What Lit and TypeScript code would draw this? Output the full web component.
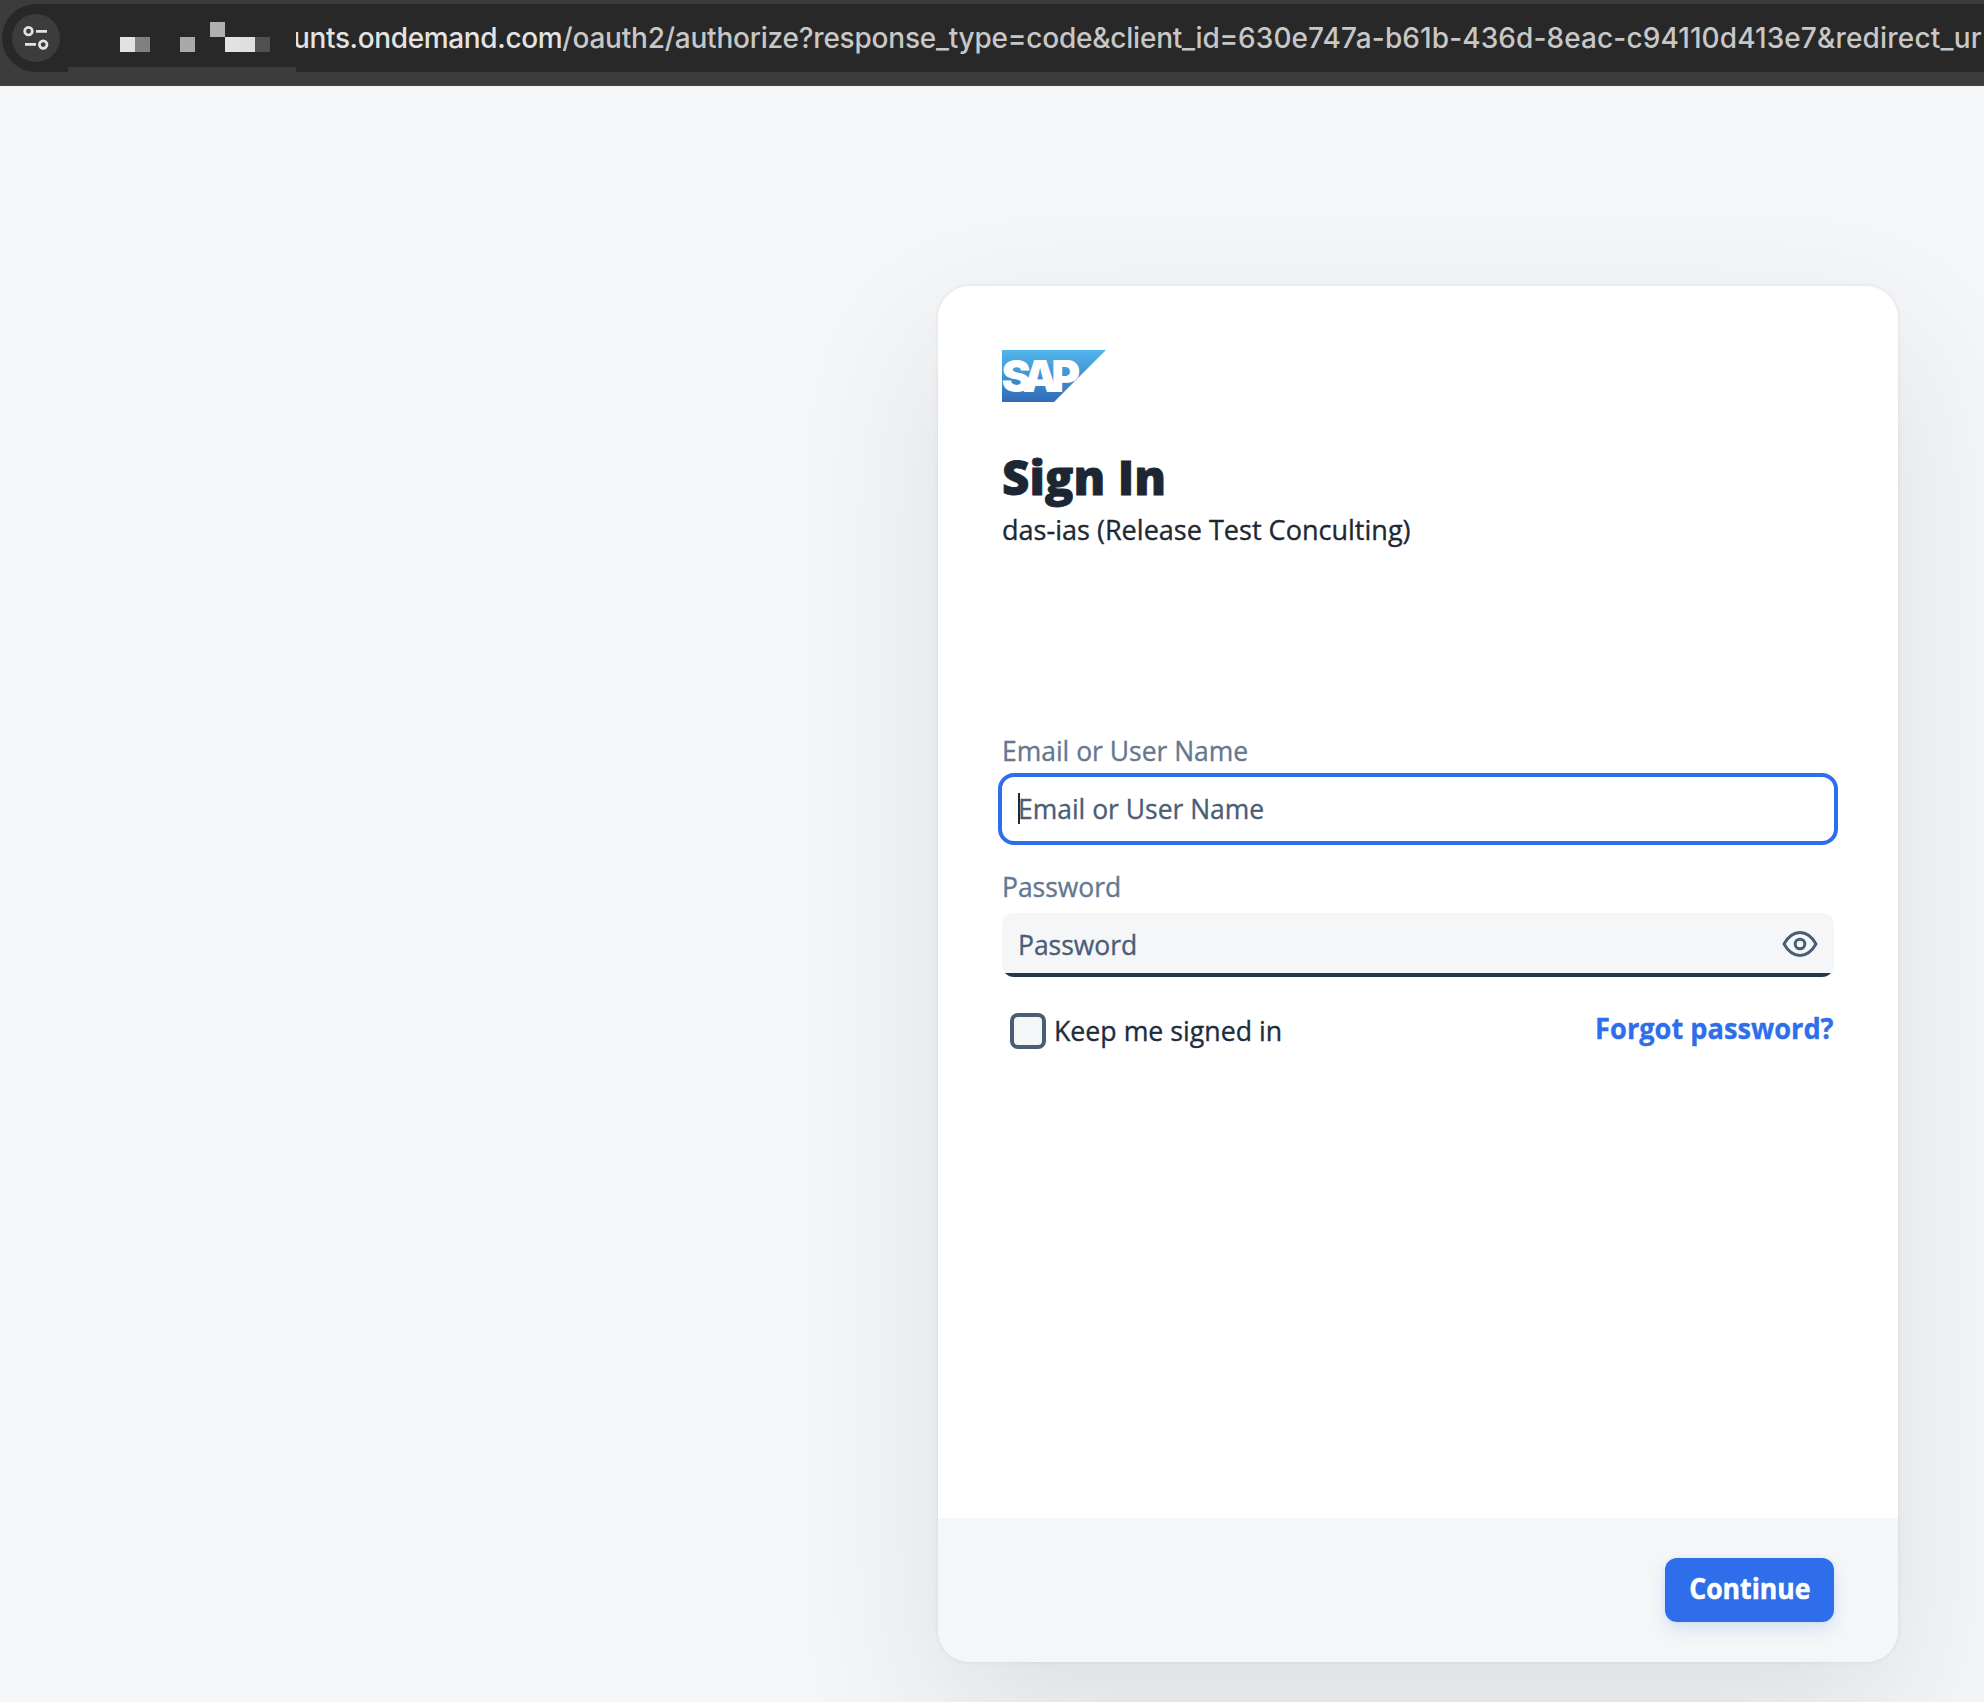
import { LitElement, html, css, svg } from "lit";
import { customElement } from "lit/decorators.js";

interface Block { x: number; y: number; c: string }

const BLOCKS: Block[] = [
  { x: 52, y: 15, c: "#e2e2e2" },
  { x: 67, y: 15, c: "#808080" },
  { x: 112, y: 15, c: "#a9a9a9" },
  { x: 142, y: 0, c: "#b0b0b0" },
  { x: 157, y: 15, c: "#e2e2e2" },
  { x: 172, y: 15, c: "#dfdfdf" },
  { x: 187, y: 15, c: "#515151" },
];

@customElement("address-bar")
class AddressBar extends LitElement {
  static styles = css`
    :host { display: block; height: 86px; box-sizing: border-box; background: #3c3c3c; border-bottom: 1px solid #444141; padding: 4px 0 0 2px; overflow: hidden; }
    .pill { display: flex; height: 68px; background: #282828; border-radius: 34px 0 0 34px; }
    .site { flex: none; width: 48px; height: 48px; margin: 10px 8px 0 10px; border-radius: 50%; background: #3c3c3c; }
    .site svg, .mosaic svg { display: block; }
    .mosaic { flex: none; width: 228px; height: 5px; margin-top: 63px; background: #3c3c3c; position: relative; }
    .mosaic svg { position: absolute; left: 0; top: -45px; }
    .url { flex: 1; min-width: 0; overflow: hidden; white-space: nowrap; font: 450 28px/68px Inter, sans-serif; color: #c7c7c7; }
    .text { display: inline-block; margin-left: -3px; }
    .host { color: #e3e3e3; letter-spacing: -0.36px; }
    .path { letter-spacing: -0.22px; }
    .id { letter-spacing: 0.1px; }
    .rest { letter-spacing: 0.2px; }
  `;
  render() {
    return html`
      <div class="pill">
        <div class="site">
          <svg width="48" height="48" viewBox="0 0 48 48" fill="none" stroke="#e3e3e3" stroke-width="2.7">
            <circle cx="16.5" cy="17.2" r="3.8" /><path d="M24 17.3h11M13 30.4h11" />
            <circle cx="31.2" cy="30.6" r="3.8" />
          </svg>
        </div>
        <div class="mosaic">
          <svg width="228" height="34">
            ${BLOCKS.map((b) => svg`<rect x=${b.x} y=${b.y} width="15" height="15" fill=${b.c} />`)}
          </svg>
        </div>
        <div class="url"><span class="text"><span class="host">unts.ondemand.com</span><span class="path">/oauth2/authorize?response_type=code&amp;client_id=</span><span class="id">630e747a-b61b-436d-8eac-c94110d413e7</span><span class="rest">&amp;redirect_ur</span></span></div>
      </div>
    `;
  }
}

@customElement("sign-in-card")
class SignInCard extends LitElement {
  static styles = css`
    :host { display: flex; flex-direction: column; box-sizing: border-box; width: 960px; height: 1376px; border-radius: 32px; background: #fff; overflow: hidden;
      box-shadow: 0 0 4px rgba(34, 53, 72, 0.09), 0 60px 150px rgba(34, 44, 54, 0.11);
      font: 400 28px/40px "Open Sans", sans-serif; color: #1d2d3e; white-space: nowrap; -webkit-text-stroke: 0.35px currentColor; }
    .body { flex: 1; padding: 64px 64px 0; display: flex; flex-direction: column; }
    .logo { display: block; width: 104px; height: 52px; }
    .logo text { font: 900 44px Inter, sans-serif; letter-spacing: -6.7px; fill: #fff; }
    h1 { margin: 45px 0 0; font-size: 47px; line-height: 60px; font-weight: 800; color: #1c2733; -webkit-text-stroke: 0.8px #1c2733; }
    .fit { display: inline-block; transform-origin: 0 50%; transform: scaleX(0.945); }
    h1 .fit { transform: scaleX(1.01); }
    .sub { margin-top: 2px; height: 40px; color: #1d2833; }
    .sub .fit { transform: scaleX(0.966); }
    .field-label { height: 40px; color: #64788f; }
    .first { margin-top: 181px; }
    .second { margin-top: 21px; }
    .field { box-sizing: border-box; display: flex; align-items: center; justify-content: space-between; height: 64px; padding: 0 16px 3px; border-radius: 12px; color: #4b5d75; background: #f4f5f7; position: relative; overflow: hidden; margin-top: 7px; }
    .focused { height: 72px; margin: 3px -4px 0; padding: 0 16px 3px; border: 4px solid #2f6eea; border-radius: 16px; background: #fff; overflow: visible; }
    .caret { position: absolute; left: 16px; top: 16px; width: 2px; height: 31px; background: #1d2d3e; }
    .password { background: linear-gradient(#26364a, #26364a) 0 100% / 100% 4px no-repeat #f4f6f8; }
    .options { display: flex; justify-content: space-between; margin-top: 31px; height: 40px; }
    .keep { display: flex; gap: 8px; padding: 2px 0 0 8px; }
    .keep .fit { transform: scaleX(0.954); }
    .box { box-sizing: border-box; width: 36px; height: 36px; margin-top: 3px; border: 4px solid #4b5d75; border-radius: 8px; background: #f4f6f8; }
    .fit.forgot { color: #2f6eea; font-weight: 700; transform-origin: 100% 50%; transform: scaleX(0.971); }
    footer { height: 144px; box-sizing: border-box; display: flex; align-items: center; justify-content: flex-end; padding: 0 64px; background: #f4f6f8; }
    button { width: 169px; height: 64px; padding: 0 0 4px; border: 0; border-radius: 12px; background: #2f6eea; color: #fff; font: 700 28px/60px "Open Sans", sans-serif; -webkit-text-stroke: 0.5px #fff; box-shadow: 0 8px 16px rgba(47, 110, 234, 0.13), 0 0 4px rgba(47, 110, 234, 0.1); }
    .continue { transform-origin: 50% 50%; transform: scaleX(0.95); }
  `;
  render() {
    return html`
      <div class="body">
        <svg class="logo" viewBox="0 0 104 52">
          <defs><linearGradient id="g" x1="0" y1="0" x2="0" y2="1"><stop offset="0" stop-color="#52b6ec" /><stop offset="1" stop-color="#306cb8" /></linearGradient></defs>
          <path d="M0 0H104L52 52H0Z" fill="url(#g)" />
          <text x="-0.5" y="41.7">SAP</text>
        </svg>
        <h1><span class="fit">Sign In</span></h1>
        <div class="sub"><span class="fit">das-ias (Release Test Conculting)</span></div>
        <div class="field-label first"><span class="fit">Email or User Name</span></div>
        <div class="field focused"><span class="fit">Email or User Name</span><span class="caret"></span></div>
        <div class="field-label second"><span class="fit">Password</span></div>
        <div class="field password">
          <span class="fit">Password</span>
          <svg width="36" height="28" viewBox="0 0 36 28" fill="none" stroke="#4b5d75" stroke-width="3" stroke-linejoin="round">
            <path d="M2 14C6 7 11.500 2.600 18 2.600S30 7 34 14C30 21 24.500 25.400 18 25.400S6 21 2 14Z" />
            <circle cx="18" cy="14" r="4.800" />
          </svg>
        </div>
        <div class="options">
          <div class="keep"><span class="box"></span><span class="fit">Keep me signed in</span></div>
          <span class="fit forgot">Forgot password?</span>
        </div>
      </div>
      <footer><button><span class="fit continue">Continue</span></button></footer>
    `;
  }
}

@customElement("app-root")
class AppRoot extends LitElement {
  static styles = css`
    :host { display: block; }
    .page { height: 1702px; display: flex; flex-direction: column; overflow: hidden; background: #f4f6f8; }
    main { flex: 1; box-sizing: border-box; padding: 200px 86px 0 0; display: flex; justify-content: flex-end; }
    sign-in-card { flex: none; }
  `;
  render() {
    return html`<div class="page"><address-bar></address-bar><main><sign-in-card></sign-in-card></main></div>`;
  }
}
